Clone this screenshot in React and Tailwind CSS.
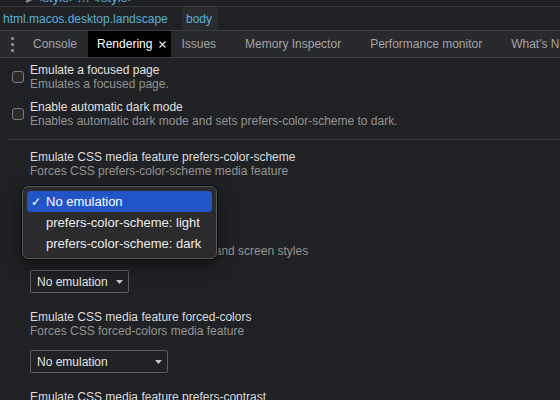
import React from 'react';

const font = "font-['Liberation_Sans',Arial,Helvetica,sans-serif]";

function Caret() {
  return (
    <svg width="7" height="4" viewBox="0 0 7 4" className="shrink-0">
      <path d="M0 0 L7 0 L3.5 4 Z" fill="#c8c8c8" />
    </svg>
  );
}

function Select({ width, label = 'No emulation' }) {
  return (
    <div
      className={`flex items-center justify-between h-[23px] border border-[#5c5d60] rounded-[2px] pl-[6px] pr-[5px] text-[12px] text-[#e3e3e3] ${width}`}
    >
      <span>{label}</span>
      <Caret />
    </div>
  );
}

function Check({ title, desc }) {
  return (
    <div className="flex items-center pl-[12px]">
      <div className="shrink-0 w-[12px] h-[12px] rounded-[3px] border border-[#7a7a7d] bg-[#2a2a2c] mr-[6px]" />
      <div>
        <div className="leading-[14px] text-[#e0e0e0]">{title}</div>
        <div className="leading-[14px] text-[#939393]">{desc}</div>
      </div>
    </div>
  );
}

function Feature({ title, desc, width }) {
  return (
    <div className="pl-[30px] mb-[17px]">
      <div className="leading-[14px] text-[#dcdcdc]">{title}</div>
      <div className="leading-[14px] text-[#939393]">{desc}</div>
      <div className="mt-[12px] flex">
        <Select width={width} />
      </div>
    </div>
  );
}

export default function App() {
  const tabs = ['Issues', 'Memory Inspector', 'Performance monitor', "What's New"];

  return (
    <div className={`relative w-[560px] h-[400px] overflow-hidden bg-[#202124] text-[12px] ${font}`}>
      {/* tail of the elements tree */}
      <div className="h-[7px] overflow-hidden border-b border-[#3a3b3e]">
        <div className="mt-[-9px] pl-[26px] leading-[14px] text-[13px] text-[#5db0d7] whitespace-nowrap">
          <span className="text-[#8a8a8a] text-[9px] mr-[2px]">▶</span>&lt;style&gt;…&lt;/style&gt;
        </div>
      </div>

      {/* breadcrumbs */}
      <div className="flex h-[24px] border-b border-[#3a3b3e] text-[#5db0d7]">
        <div className="shrink-0 w-[182px] pl-[3px] flex items-center whitespace-nowrap">html.macos.desktop.landscape</div>
        <div className="shrink-0 flex items-center pl-[4px] pr-[6px] bg-[#2a2b2e]">body</div>
      </div>

      {/* drawer tabs */}
      <div className="flex h-[27px] bg-[#28292c] border-b border-[#3a3b3e] text-[#a3a3a6] whitespace-nowrap overflow-hidden">
        <div className="shrink-0 w-[23px] flex flex-col items-center justify-center gap-[3px] pl-[1px]">
          <span className="w-[3px] h-[3px] rounded-full bg-[#9a9a9d]" />
          <span className="w-[3px] h-[3px] rounded-full bg-[#9a9a9d]" />
          <span className="w-[3px] h-[3px] rounded-full bg-[#9a9a9d]" />
        </div>
        <div className="shrink-0 flex items-center pl-[10px] pr-[11px]">Console</div>
        <div className="shrink-0 flex items-center pl-[9px] pr-[5px] bg-black text-white">
          Rendering
          <svg width="7" height="7" viewBox="0 0 7 7" className="ml-[7px]">
            <path d="M0.5 0.5 L6.5 6.5 M6.5 0.5 L0.5 6.5" stroke="#e8e8e8" strokeWidth="1.2" />
          </svg>
        </div>
        {tabs.map((t) => (
          <div key={t} className="shrink-0 flex items-center pl-[10px] pr-[19px]">{t}</div>
        ))}
      </div>

      {/* rendering panel */}
      <div className="pt-[5px]">
        <Check title="Emulate a focused page" desc="Emulates a focused page." />
        <div className="h-[9px]" />
        <Check
          title="Enable automatic dark mode"
          desc="Enables automatic dark mode and sets prefers-color-scheme to dark."
        />
        <div className="ml-[8px] mt-[11px] border-t border-[#3a3b3e]" />
        <div className="pt-[10px]">
          <Feature
            title="Emulate CSS media feature prefers-color-scheme"
            desc="Forces CSS prefers-color-scheme media feature"
            width="w-[99px]"
          />
          <Feature
            title="Emulate CSS media type"
            desc="Forces media type for testing print and screen styles"
            width="w-[99px]"
          />
          <Feature
            title="Emulate CSS media feature forced-colors"
            desc="Forces CSS forced-colors media feature"
            width="w-[138px]"
          />
          <Feature
            title="Emulate CSS media feature prefers-contrast"
            desc="Forces CSS prefers-contrast media feature"
            width="w-[138px]"
          />
        </div>
      </div>

      {/* native select menu open over the first select */}
      <div className="absolute left-[22px] top-[186px] w-[195px] h-[73px] rounded-[6px] border border-[#56575b] bg-[#2b2b2e] shadow-[0_0_0_1px_#0c0c0c,0_6px_16px_rgba(0,0,0,0.5)] px-[4px] py-[4px] text-[13px] text-[#ececec]">
        <div className="flex items-center h-[21px] rounded-[4px] bg-[#2154c6] text-white">
          <span className="w-[19px] pl-[4px] text-[12px]">✓</span>
          No emulation
        </div>
        <div className="flex items-center h-[21px] pl-[19px]">prefers-color-scheme: light</div>
        <div className="flex items-center h-[21px] pl-[19px]">prefers-color-scheme: dark</div>
      </div>
    </div>
  );
}
